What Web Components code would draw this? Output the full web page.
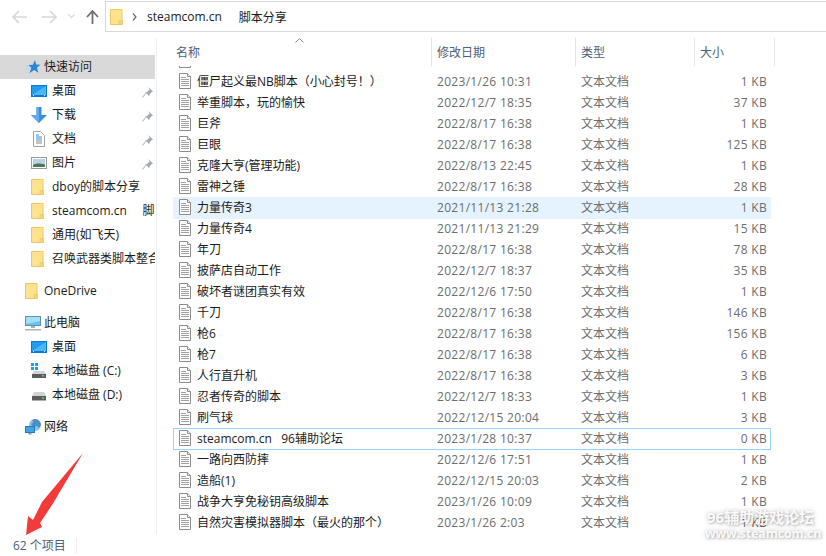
<!DOCTYPE html>
<html>
<head>
<meta charset="utf-8">
<title>脚本分享</title>
<style>
  html, body { margin: 0; height: 100%; background: #fff; overflow: hidden; }
  body { font: 12px "Open Sans", "Noto Sans CJK SC", sans-serif; color: #1a1a1a; }
</style>
</head>
<body>
<explorer-window></explorer-window>

<script>
const html = String.raw;

// little svg set, all drawn on a 16 unit box unless noted
const ICONS = {
  folder: html`<svg width="16" height="16" viewBox="0 0 16 16"><path d="M.5 .5h11.500v15H.5z" fill="#fde28f" stroke="#ebc864"/><path d="M9 15.500v-4h3.500v4z" fill="#f7d373" stroke="#ebc864" stroke-width=".8"/></svg>`,
  file: html`<svg width="16" height="16" viewBox="0 0 16 16"><path d="M1.500 .5h8l3 3v12h-11z" fill="#fff" stroke="#8c8c8c"/><path d="M9.500 .5v3h3" fill="#eee" stroke="#8c8c8c"/><path d="M3 4.500h5M3 6.500h8M3 8.500h8M3 10.500h8M3 12.500h8" stroke="#a0a0a0"/></svg>`,
  star: html`<svg width="16" height="16" viewBox="0 0 16 16"><path d="M10 1l1.200 4.400 4.300.3-3.500 2.900 1.200 5.200-4-2.700-4.700 3.200 1.800-5.500-3-2.800 4.600-.2z" fill="#2a86d6"/><path d="M0 7h4M1 10h3M0 13h3" stroke="#a5d3f3"/></svg>`,
  desktop: html`<svg width="16" height="12" viewBox="0 0 16 12"><rect width="16" height="12" fill="#0b78d0"/><rect x="1" y="1" width="14" height="9" fill="#1f9bef"/><path d="M1 10l14-9v9z" fill="#4db6f5"/><path d="M2 10.500h1M13 10.500h1" stroke="#d9f0ff"/></svg>`,
  download: html`<svg width="16" height="16" viewBox="0 0 16 16"><path d="M5.500 0h5v8h5.500l-8 8-8-8h5.500z" fill="#3a8fdc"/><path d="M5.500 0h2.500v16l-8-8h5.500z" fill="#62abe9"/></svg>`,
  doc: html`<svg width="12" height="16" viewBox="0 0 12 16"><path d="M.5 .5h7l4 4v11h-11z" fill="#fff" stroke="#a3a3a3"/><path d="M3 4h3M3 6h6M3 8h6" stroke="#2f8fdc"/><path d="M3 10h6M3 12h6" stroke="#8a8a8a"/></svg>`,
  picture: html`<svg width="16" height="12" viewBox="0 0 16 12"><rect x=".5" y=".5" width="15" height="11" fill="#fff" stroke="#9a9a9a"/><rect x="2" y="2" width="12" height="8" fill="#b9d3e6"/><path d="M2 8c3-2 6-2 12-.5v2.500h-12z" fill="#4d7a52"/></svg>`,
  pin: html`<svg width="11" height="11" viewBox="0 0 11 11"><path d="M6.500 0l4.500 4.500-1.200.4-2.300 2.600-.2 1.800-4.100-4.100 1.800-.2 2.600-2.300z" fill="#a4a9ad"/><path d="M3.500 6.500l-3 4" stroke="#a4a9ad"/></svg>`,
  pc: html`<svg width="16" height="16" viewBox="0 0 16 16"><rect x=".5" y="1.500" width="15" height="9" fill="#69c3f2" stroke="#5d93ad"/><path d="M1 2h14v4l-14 3z" fill="#a4dff8"/><rect x="6" y="11" width="4" height="2" fill="#9fb2bd"/><rect x="0" y="14" width="16" height="1.500" fill="#a9b5bd"/></svg>`,
  driveC: html`<svg width="16" height="16" viewBox="0 0 16 16"><rect x="0" y="0" width="3" height="3" fill="#18a0ea"/><rect x="4" y="0" width="3" height="3" fill="#18a0ea"/><rect x="0" y="4" width="3" height="3" fill="#18a0ea"/><rect x="4" y="4" width="3" height="3" fill="#18a0ea"/><path d="M3 8h10l2 3H1z" fill="#d2d2d2"/><rect x="1" y="11" width="14" height="4" fill="#5c5c5c"/><rect x="11" y="12" width="2" height="1.500" fill="#5fd35f"/></svg>`,
  driveD: html`<svg width="16" height="16" viewBox="0 0 16 16"><path d="M3 5h10l2 4H1z" fill="#d2d2d2"/><rect x="1" y="9" width="14" height="4.500" fill="#5c5c5c"/><rect x="11" y="10.500" width="2" height="1.500" fill="#5fd35f"/></svg>`,
  network: html`<svg width="16" height="16" viewBox="0 0 16 16"><circle cx="10" cy="6" r="6" fill="#8cc3e8"/><path d="M7 1c2 2 1 3-1 4l2 3 4-1 2 2 2-3c0-3-3-6-6-6z" fill="#4c8fc4"/><rect x=".5" y="7.500" width="9" height="6" fill="#3ea3e8" stroke="#2b78b4"/><rect x="3.500" y="14" width="3" height="1.500" fill="#8a9aa6"/></svg>`
};

class AppIcon extends HTMLElement {
  connectedCallback() {
    if (this.shadowRoot) return;
    const root = this.attachShadow({ mode: 'open' });
    root.innerHTML = html`
      <style>
        :host { display: inline-flex; align-items: center; justify-content: center; flex: none; width: 16px; height: 16px; }
        svg { display: block; }
      </style>
      ${ICONS[this.getAttribute('name')] || ''}
    `;
  }
}
customElements.define('app-icon', AppIcon);

class NavBar extends HTMLElement {
  constructor() {
    super();
    this.attachShadow({ mode: 'open' }).innerHTML = html`
      <style>
        :host { display: flex; align-items: center; height: 32px; box-sizing: border-box; padding: 1px 0 0 12px; }
        .btn { display: block; flex: none; }
        .crumbs {
          flex: 1; height: 31px; margin-left: 6px; box-sizing: border-box; border: 1px solid #d9d9d9; border-right: 0;
          display: flex; align-items: center; padding-left: 4px; font-size: 12px; color: #1a1a1a;
        }
        .crumbs .sep { margin: 0 10px 0 6px; display: block; }
        .crumbs .name { margin-right: 17px; }
      </style>
      <svg class="btn" width="15" height="14" viewBox="0 0 15 14" style="margin-right:15px"><path d="M7 1L1 7l6 6M1 7h14" fill="none" stroke="#d8d8d8" stroke-width="1.600"/></svg>
      <svg class="btn" width="15" height="14" viewBox="0 0 15 14" style="margin-right:11px"><path d="M8 1l6 6-6 6M14 7H0" fill="none" stroke="#d8d8d8" stroke-width="1.600"/></svg>
      <svg class="btn" width="7" height="5" viewBox="0 0 7 5" style="margin-right:11px"><path d="M.5 .5l3 3 3-3" fill="none" stroke="#d8d8d8" stroke-width="1.200"/></svg>
      <svg class="btn" width="13" height="14" viewBox="0 0 13 14"><path d="M6.500 14V2M1 7l5.500-6L12 7" fill="none" stroke="#6f6f6f" stroke-width="1.800"/></svg>
      <div class="crumbs">
        <app-icon name="folder"></app-icon>
        <svg class="sep" width="5" height="8" viewBox="0 0 5 8"><path d="M1 .5l3 3.500-3 3.500" fill="none" stroke="#6a6a6a" stroke-width="1.200"/></svg>
        <span class="name">steamcom.cn</span><span>脚本分享</span>
      </div>
    `;
  }
}
customElements.define('nav-bar', NavBar);

class TreeItem extends HTMLElement {
  constructor() {
    super();
    this.attachShadow({ mode: 'open' }).innerHTML = html`
      <style>
        :host { display: flex; align-items: center; height: 24px; flex: none; overflow: hidden; white-space: nowrap; position: relative; color: #1a1a1a; }
        :host([active]) { background: #d9d9d9; }
        :host([indent="0"]) { padding-left: 25px; }
        :host([indent="1"]) { padding-left: 31px; }
        :host([indent="0"]) .ico { margin-right: 3px; }
        .ico { margin-right: 5px; }
        .label { margin-bottom: 2px; }
        .pin { position: absolute; left: 139px; top: 5px; }
      </style>
      <app-icon class="ico" name="${this.getAttribute('icon')}"></app-icon>
      <span class="label"><slot></slot></span>
      ${this.hasAttribute('pinned') ? html`<app-icon class="pin" name="pin"></app-icon>` : ''}
    `;
  }
}
customElements.define('tree-item', TreeItem);

class NavPane extends HTMLElement {
  constructor() {
    super();
    this.attachShadow({ mode: 'open' }).innerHTML = html`
      <style>
        :host { display: flex; flex-direction: column; width: 155px; padding-top: 23px; overflow: hidden; }
        .gap { height: 8px; flex: none; }
      </style>
      <tree-item indent="0" icon="star" active>快速访问</tree-item>
      <tree-item indent="1" icon="desktop" pinned>桌面</tree-item>
      <tree-item indent="1" icon="download" pinned>下载</tree-item>
      <tree-item indent="1" icon="doc" pinned>文档</tree-item>
      <tree-item indent="1" icon="picture" pinned>图片</tree-item>
      <tree-item indent="1" icon="folder">dboy的脚本分享</tree-item>
      <tree-item indent="1" icon="folder">steamcom.cn&nbsp;&nbsp;&nbsp;&nbsp;&nbsp;脚本分享</tree-item>
      <tree-item indent="1" icon="folder">通用(如飞天)</tree-item>
      <tree-item indent="1" icon="folder">召唤武器类脚本整合</tree-item>
      <div class="gap"></div>
      <tree-item indent="0" icon="folder">OneDrive</tree-item>
      <div class="gap"></div>
      <tree-item indent="0" icon="pc">此电脑</tree-item>
      <tree-item indent="1" icon="desktop">桌面</tree-item>
      <tree-item indent="1" icon="driveC">本地磁盘 (C:)</tree-item>
      <tree-item indent="1" icon="driveD">本地磁盘 (D:)</tree-item>
      <div class="gap"></div>
      <tree-item indent="0" icon="network">网络</tree-item>
    `;
  }
}
customElements.define('nav-pane', NavPane);

class FileRow extends HTMLElement {
  constructor() {
    super();
    const [name, date, size] = ['name', 'date', 'size'].map(a => this.getAttribute(a));
    this.attachShadow({ mode: 'open' }).innerHTML = html`
      <style>
        :host {
          display: grid; grid-template-columns: 264px 144px 119px 67px; align-items: center;
          height: 22px; margin-bottom: -1px; padding-bottom: 2px; box-sizing: border-box; width: 598px; white-space: nowrap;
          color: #6d6d6d; position: relative;
        }
        :host([hover]) { background: #e5f3ff; }
        :host([focused]) { box-shadow: inset 0 0 0 1px #99d1ff; }
        .name { display: flex; align-items: center; color: #1a1a1a; padding-left: 5px; }
        .name span { margin-left: 3px; }
        .date, .size { letter-spacing: .3px; }
        .size { text-align: right; }
      </style>
      <div class="name"><app-icon name="file"></app-icon><span>${name}</span></div>
      <div class="date">${date}</div>
      <div>文本文档</div>
      <div class="size">${size} KB</div>
    `;
  }
}
customElements.define('file-row', FileRow);

const FILES = [
  ['僵尸起义最NB脚本（小心封号！）', '2023/1/26 10:31', 1],
  ['举重脚本，玩的愉快', '2022/12/7 18:35', 37],
  ['巨斧', '2022/8/17 16:38', 1],
  ['巨眼', '2022/8/17 16:38', 125],
  ['克隆大亨(管理功能)', '2022/8/13 22:45', 1],
  ['雷神之锤', '2022/8/17 16:38', 28],
  ['力量传奇3', '2021/11/13 21:28', 1, 'hover'],
  ['力量传奇4', '2021/11/13 21:29', 15],
  ['年刀', '2022/8/17 16:38', 78],
  ['披萨店自动工作', '2022/12/7 18:37', 35],
  ['破坏者谜团真实有效', '2022/12/6 17:50', 1],
  ['千刀', '2022/8/17 16:38', 146],
  ['枪6', '2022/8/17 16:38', 156],
  ['枪7', '2022/8/17 16:38', 6],
  ['人行直升机', '2022/8/17 16:38', 3],
  ['忍者传奇的脚本', '2022/12/7 18:33', 1],
  ['刷气球', '2022/12/15 20:04', 3],
  ['steamcom.cn&nbsp;&nbsp;&nbsp;96辅助论坛', '2023/1/28 10:37', 0, 'focused'],
  ['一路向西防摔', '2022/12/6 17:51', 1],
  ['造船(1)', '2022/12/15 20:03', 2],
  ['战争大亨免秘钥高级脚本', '2023/1/26 10:09', 1],
  ['自然灾害模拟器脚本（最火的那个）', '2023/1/26 2:03', 1]
];

class FileList extends HTMLElement {
  constructor() {
    super();
    const rows = FILES.map(([name, date, size, flag]) =>
      `<file-row name="${name}" date="${date}" size="${size}" ${flag || ''}></file-row>`).join('');
    this.attachShadow({ mode: 'open' }).innerHTML = html`
      <style>
        :host { display: flex; flex-direction: column; flex: 1; min-width: 0; border-left: 1px solid #f0f0f0; margin-left: 1px; margin-top: 6px; position: relative; }
        .head { display: grid; grid-template-columns: 261px 144px 119px 80px; height: 28px; flex: none; padding-left: 14px; color: #4c607a; }
        .head div { display: flex; align-items: center; padding-left: 5px; border-right: 1px solid #e5e5e5; box-sizing: border-box; }
        .sort { position: absolute; left: 138px; top: 0; }
        .rows { flex: 1; overflow: hidden; padding-left: 16px; }
        .clip { margin-top: -16px; }
      </style>
      <div class="head"><div>名称</div><div>修改日期</div><div>类型</div><div>大小</div></div>
      <svg class="sort" width="9" height="5" viewBox="0 0 9 5"><path d="M.5 4.500l4-4 4 4" fill="none" stroke="#8a8a8a"/></svg>
      <div class="rows"><div class="clip"><file-row name="" date="" size=""></file-row></div>${rows}</div>
    `;
  }
}
customElements.define('file-list', FileList);

class ExplorerWindow extends HTMLElement {
  constructor() {
    super();
    this.attachShadow({ mode: 'open' }).innerHTML = html`
      <style>
        :host { display: flex; flex-direction: column; width: 826px; height: 556px; position: relative; overflow: hidden; background: #fff; }
        .main { display: flex; flex: 1; min-height: 0; }
        .status { height: 22px; flex: none; box-sizing: border-box; padding: 2px 0 0 13px; display: flex; align-items: center; color: #4c607a; }
        .status span { padding-right: 10px; border-right: 1px solid #f0f0f0; line-height: 16px; }
        .arrow { position: absolute; left: 24px; top: 452px; }
        .mark { position: absolute; left: 705px; top: 508px; color: rgba(255,255,255,.92); font-weight: 700; text-shadow: 0 0 5px rgba(0,0,0,.28), 1px 1px 2px rgba(0,0,0,.18); white-space: nowrap; }
        .mark div:first-child { font-size: 15px; line-height: 18px; margin-left: 2px; }
        .mark div:last-child { font-size: 12.500px; line-height: 16px; letter-spacing: -.2px; }
      </style>
      <nav-bar></nav-bar>
      <div class="main"><nav-pane></nav-pane><file-list></file-list></div>
      <div class="status"><span>62 个项目</span></div>
      <svg class="arrow" width="60" height="84" viewBox="0 0 60 84"><path d="M59 1L28 53 16 71l2 4-16 8 2-19 5 4 9-18z" fill="#f53a3a"/></svg>
      <div class="mark"><div>96辅助游戏论坛</div><div>www.steamcom.cn</div></div>
    `;
  }
}
customElements.define('explorer-window', ExplorerWindow);
</script>
</body>
</html>
